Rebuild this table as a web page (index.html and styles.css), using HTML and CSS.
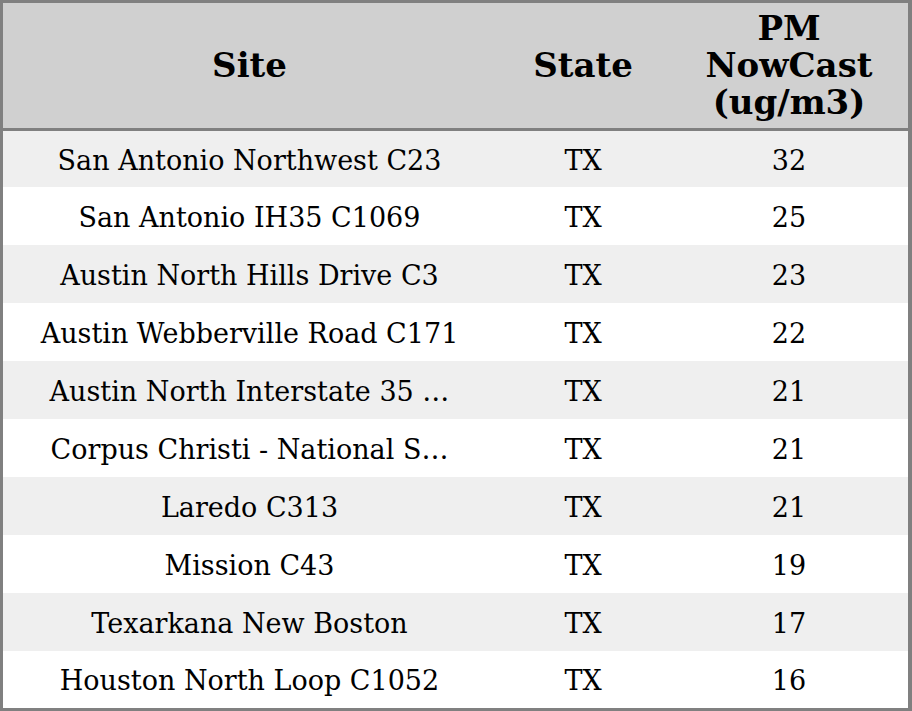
FILE: index.html
```html
<!DOCTYPE html>
<html lang="en">
<head>
<meta charset="utf-8">
<title>PM NowCast</title>
<link rel="stylesheet" href="styles.css">
</head>
<body>
<table class="aq-table">
  <colgroup>
    <col class="col-site">
    <col class="col-state">
    <col class="col-pm">
  </colgroup>
  <thead>
    <tr>
      <th>Site</th>
      <th>State</th>
      <th>PM<br>NowCast<br>(ug/m3)</th>
    </tr>
  </thead>
  <tbody>
    <tr><td>San Antonio Northwest C23</td><td>TX</td><td>32</td></tr>
    <tr><td>San Antonio IH35 C1069</td><td>TX</td><td>25</td></tr>
    <tr><td>Austin North Hills Drive C3</td><td>TX</td><td>23</td></tr>
    <tr><td>Austin Webberville Road C171</td><td>TX</td><td>22</td></tr>
    <tr><td>Austin North Interstate 35 …</td><td>TX</td><td>21</td></tr>
    <tr><td>Corpus Christi - National S…</td><td>TX</td><td>21</td></tr>
    <tr><td>Laredo C313</td><td>TX</td><td>21</td></tr>
    <tr><td>Mission C43</td><td>TX</td><td>19</td></tr>
    <tr><td>Texarkana New Boston</td><td>TX</td><td>17</td></tr>
    <tr><td>Houston North Loop C1052</td><td>TX</td><td>16</td></tr>
  </tbody>
</table>
</body>
</html>
```
FILE: styles.css
```css
html, body {
  margin: 0;
  padding: 0;
  background: #ffffff;
}

.aq-table {
  width: 912px;
  table-layout: fixed;
  border-collapse: separate;
  border-spacing: 0;
  border: 3px solid #808080;
  border-right-width: 4px;
  font-family: "DejaVu Serif", "Liberation Serif", serif;
  color: #000;
}

.col-site { width: 493px; }
.col-state { width: 174px; }
.col-pm { width: 238px; }

.aq-table th {
  background: #d0d0d0;
  height: 125px;
  padding: 0;
  font-size: 34px;
  font-weight: bold;
  line-height: 37px;
  text-align: center;
  vertical-align: middle;
  border-bottom: 3px solid #808080;
}

.aq-table td {
  height: 56px;
  padding: 2px 0 0;
  font-size: 27px;
  text-align: center;
  vertical-align: middle;
  white-space: nowrap;
}

.aq-table tbody tr:first-child td { height: 54px; }
.aq-table tbody tr:last-child td { height: 55px; }

.aq-table tbody tr:nth-child(odd) td {
  background: #efefef;
}
```
